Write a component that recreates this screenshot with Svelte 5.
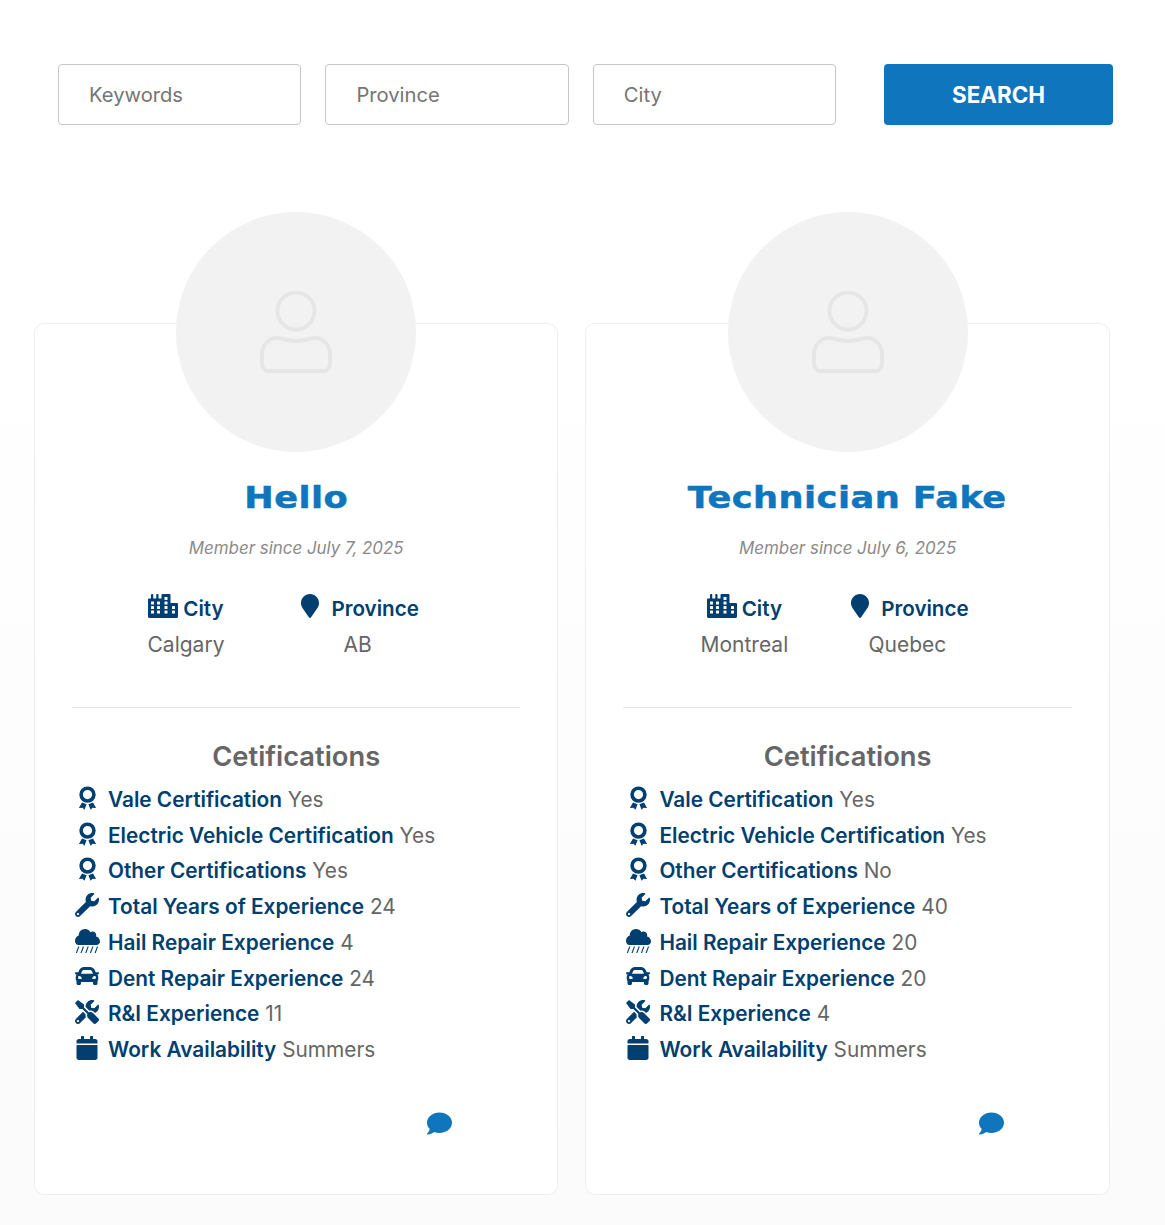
<script>
  const I = {
    wrench: { v: '0 0 512 512', d: 'M507.73 109.1c-2.24-9.03-13.54-12.09-20.12-5.51l-74.36 74.36-67.88-11.31-11.31-67.88 74.36-74.36c6.62-6.62 3.43-17.9-5.66-20.16-47.38-11.74-99.55.91-136.58 37.93-39.64 39.64-50.55 97.1-34.05 147.2L18.74 402.76c-24.99 24.99-24.99 65.51 0 90.5 24.99 24.99 65.51 24.99 90.5 0l213.21-213.21c50.12 16.71 107.47 5.68 147.37-34.22 37.07-37.07 49.7-89.32 37.91-136.73zM64 472c-13.25 0-24-10.75-24-24 0-13.26 10.75-24 24-24s24 10.74 24 24c0 13.25-10.75 24-24 24z' },
    hail: { v: '0 32 640 614', d: 'M537.6 226.6c4.1-10.7 6.4-22.4 6.4-34.6 0-53-43-96-96-96-19.7 0-38.1 6-53.3 16.2C367 64.2 315.3 32 256 32c-88.4 0-160 71.6-160 160 0 2.7.1 5.4.2 8.1C40.2 219.8 0 273.2 0 336c0 60 40 104 90 104h460c50 0 90-40 90-88 0-61.9-44-113.6-102.4-125.4z M20 646l62-168h30l-62 168zM140 646l62-168h30l-62 168zM260 646l62-168h30l-62 168zM380 646l62-168h30l-62 168zM500 646l62-168h30l-62 168z' },
    car: { v: '0 0 512 512', d: 'M499.99 176h-59.87l-16.64-41.6C406.38 91.63 365.57 64 319.5 64h-127c-46.06 0-86.88 27.63-103.99 70.4L71.87 176H12.01C4.2 176-1.53 183.34.37 190.91l6 24C7.7 220.25 12.5 224 18.01 224h20.07C24.65 235.73 16 252.78 16 272v48c0 16.12 6.16 30.67 16 41.93V416c0 17.67 14.33 32 32 32h32c17.67 0 32-14.33 32-32v-32h256v32c0 17.67 14.33 32 32 32h32c17.67 0 32-14.33 32-32v-54.07c9.84-11.25 16-25.8 16-41.93v-48c0-19.22-8.65-36.27-22.07-48H494c5.51 0 10.31-3.75 11.64-9.09l6-24c1.89-7.57-3.84-14.91-11.65-14.91zm-352.06-17.83c7.29-18.22 24.94-30.17 44.57-30.17h127c19.63 0 37.28 11.95 44.57 30.17L384 208H128l19.93-49.83zM96 319.8c-19.2 0-32-12.76-32-31.9S76.8 256 96 256s48 28.71 48 47.85-28.8 15.95-48 15.95zm320 0c-19.2 0-48 3.19-48-15.95S396.8 256 416 256s32 12.76 32 31.9-12.8 31.9-32 31.9z' },
    tools: { v: '0 0 512 512', d: 'M501.1 395.7L384 278.6c-23.1-23.1-57.6-27.6-85.4-13.9L192 158.1V96L64 0 0 64l96 128h62.1l106.6 106.6c-13.6 27.8-9.2 62.3 13.9 85.4l117.1 117.1c14.6 14.6 38.2 14.6 52.7 0l52.7-52.7c14.5-14.6 14.5-38.2 0-52.7zM331.7 225c28.3 0 54.9 11 74.9 31l19.4 19.4c15.8-6.9 30.8-16.5 43.8-29.5 37.1-37.1 49.7-89.3 37.9-136.7-2.2-9-13.5-12.1-20.1-5.5l-74.4 74.4-67.9-11.3L334 98.9l74.4-74.4c6.6-6.6 3.4-17.9-5.7-20.2-47.4-11.7-99.6.9-136.6 37.9-28.5 28.5-41.9 66.1-41.2 103.6l82.1 82.1c8.1-1.9 16.5-2.9 24.7-2.9zm-103.9 82l-56.7-56.7L18.7 402.8c-25 25-25 65.5 0 90.5s65.5 25 90.5 0l123.6-123.6c-7.6-19.9-9.9-41.6-5-62.7zM64 472c-13.2 0-24-10.8-24-24 0-13.3 10.7-24 24-24s24 10.7 24 24c0 13.2-10.7 24-24 24z' },
    calendar: { v: '0 0 448 512', d: 'M12 192h424c6.6 0 12 5.4 12 12v260c0 26.5-21.5 48-48 48H48c-26.5 0-48-21.5-48-48V204c0-6.6 5.4-12 12-12zm436-44v-36c0-26.5-21.5-48-48-48h-48V12c0-6.6-5.4-12-12-12h-40c-6.6 0-12 5.4-12 12v52H160V12c0-6.6-5.4-12-12-12h-40c-6.6 0-12 5.4-12 12v52H48C21.5 64 0 85.5 0 112v36c0 6.6 5.4 12 12 12h424c6.6 0 12-5.4 12-12z' }
  };
  const marker = 'M172.268 501.67C26.97 291.031 0 269.413 0 192 0 85.961 85.961 0 192 0s192 85.961 192 192c0 77.413-26.97 99.031-172.268 309.67-9.535 13.774-29.93 13.773-39.464 0z';
  const comment = 'M256 32C114.6 32 0 125.1 0 240c0 49.6 21.4 95 57 130.7C44.5 421.1 2.7 466 2.2 466.5c-2.2 2.3-2.8 5.7-1.5 8.7S4.8 480 8 480c66.3 0 116-31.8 140.6-51.4 32.7 12.3 69 19.4 107.4 19.4 141.4 0 256-93.1 256-208S397.4 32 256 32z';
  const city = 'M616 192H480V24c0-13.26-10.74-24-24-24H312c-13.26 0-24 10.74-24 24v72h-64V16c0-8.84-7.16-16-16-16h-16c-8.84 0-16 7.16-16 16v80h-64V16c0-8.84-7.16-16-16-16H80c-8.84 0-16 7.16-16 16v80H24c-13.26 0-24 10.74-24 24v360c0 17.67 14.33 32 32 32h576c17.67 0 32-14.33 32-32V216c0-13.26-10.75-24-24-24z';
  const windows = [[64,160],[64,256],[64,352],[192,160],[192,256],[192,352],[352,64],[352,160],[352,256],[352,352],[512,256],[512,352]];

  const techs = [
    { name: 'Hello', since: 'Member since July 7, 2025', city: 'Calgary', prov: 'AB', cls: 'first', vals: ['Yes','Yes','Yes','24','4','24','11','Summers'] },
    { name: 'Technician Fake', since: 'Member since July 6, 2025', city: 'Montreal', prov: 'Quebec', cls: 'second', vals: ['Yes','Yes','No','40','20','20','4','Summers'] }
  ];
  const rows = [
    ['award','Vale Certification'],
    ['award','Electric Vehicle Certification'],
    ['award','Other Certifications'],
    ['wrench','Total Years of Experience'],
    ['hail','Hail Repair Experience'],
    ['car','Dent Repair Experience'],
    ['tools','R&I Experience'],
    ['calendar','Work Availability']
  ];
</script>

<div class="page">
  <form class="search" onsubmit={(e) => e.preventDefault()}>
    <input placeholder="Keywords" />
    <input placeholder="Province" />
    <input placeholder="City" />
    <button type="submit">SEARCH</button>
  </form>

  <div class="cards">
    {#each techs as t}
      <section class="col">
        <div class="avatar">
          <svg viewBox="0 0 72 82" width="72" height="82" fill="none" stroke="#e6e6e6" stroke-width="4">
            <circle cx="36" cy="20" r="18.5" />
            <path d="M17 47c5 0 9 3 19 3s14-3 19-3c9 0 15 8 15 16v10c0 4-3 7-6 7H8c-3 0-6-3-6-7v-10c0-8 6-16 15-16z" />
          </svg>
        </div>
        <article class="card">
          <h2>{t.name}</h2>
          <p class="since">{t.since}</p>
          <div class="loc {t.cls}">
            <div class="loc-item">
              <div class="loc-head">
                <svg viewBox="0 0 640 512" width="30" height="24">
                  <path d={city} fill="#003f6f" />
                  {#each windows as w}<rect x={w[0]} y={w[1]} width="64" height="64" rx="8" fill="#fff" />{/each}
                </svg>
                <span>City</span>
              </div>
              <div class="loc-val">{t.city}</div>
            </div>
            <div class="loc-item">
              <div class="loc-head prov">
                <svg viewBox="0 0 384 512" width="18" height="24"><path d={marker} fill="#003f6f" /></svg>
                <span>Province</span>
              </div>
              <div class="loc-val prov-val">{t.prov}</div>
            </div>
          </div>
          <hr />
          <h3>Cetifications</h3>
          <ul>
            {#each rows as r, i}
              <li>
                <span class="ico">
                  {#if r[0] === 'award'}
                    <svg viewBox="0 0 19 24" class="award">
                      <circle cx="9.5" cy="8.6" r="6.4" fill="none" stroke="#003f6f" stroke-width="3.6" />
                      <path d="M4 16.5l4.6 1.7-2.2 5.5-1.9-2-3.6.4zM15 16.5l-4.6 1.7 2.2 5.5 1.9-2 3.6.4z" fill="#003f6f" />
                    </svg>
                  {:else}
                    <svg viewBox={I[r[0]].v} class={r[0]}><path d={I[r[0]].d} fill="#003f6f" /></svg>
                  {/if}
                </span>
                <span class="lbl">{r[1]}</span> <span class="val">{t.vals[i]}</span>
              </li>
            {/each}
          </ul>
          <div class="chat">
            <svg viewBox="0 0 512 512" width="25" height="25"><path d={comment} fill="#0f75bc" /></svg>
          </div>
        </article>
      </section>
    {/each}
  </div>
</div>

<style>
  :global(body) { background: #fff; }
  .page {
    height: 1225px;
    box-sizing: border-box;
    padding-top: 64px;
    overflow: hidden;
    background: linear-gradient(#fff 0, #fff 300px, #fbfbfb 1225px);
    font-family: Inter, "Liberation Sans", sans-serif;
  }
  .search {
    display: flex;
    gap: 24px;
    margin-left: 58px;
    width: 1055px;
  }
  input {
    width: 243.4px;
    height: 61px;
    box-sizing: border-box;
    border: 1px solid #c6c6c6;
    border-radius: 4px;
    padding: 0 30px;
    background: #fff;
    font: 400 20.2px Inter, sans-serif;
    outline: none;
  }
  input::placeholder { color: #757575; opacity: 1; }
  button {
    width: 229px;
    height: 61px;
    margin-left: 24px;
    border: 0;
    border-radius: 4px;
    background: #0f75bc;
    color: #fff;
    font: 700 22.4px Inter, sans-serif;
  }
  .cards {
    display: flex;
    gap: 27px;
    margin: 87px 0 0 34px;
  }
  .col {
    width: 524.4px;
    position: relative;
    padding-top: 111px;
  }
  .avatar {
    position: absolute;
    left: calc(50% - 120px);
    top: 0;
    width: 240px;
    height: 240px;
    border-radius: 50%;
    background: #f2f2f2;
    display: flex;
    align-items: center;
    justify-content: center;
    z-index: 1;
  }
  .card {
    height: 872px;
    box-sizing: border-box;
    background: #fff;
    border: 1px solid #eeeeee;
    border-radius: 10px;
    padding: 150px 37px 0;
    text-align: center;
  }
  h2 {
    margin: 0;
    font: 700 31px/46px "DejaVu Sans", sans-serif;
    color: #0f75bc;
    text-align: center;
    letter-spacing: .4px;
    transform: scaleX(1.135);
    -webkit-text-stroke: .5px #0f75bc;
  }
  .since {
    margin: 16px 0 0;
    font-size: 16.9px;
    line-height: 24px;
    font-style: italic;
    color: #8a8a8a;
    text-align: center;
  }
  .loc {
    display: flex;
    justify-content: center;
    margin-top: 33px;
    padding-right: 26px;
    font-size: 21px;
  }
  .loc-item { display: flex; flex-direction: column; align-items: center; }
  .first .loc-item:first-child { margin-right: 77px; }
  .second .loc-item:first-child { margin-right: 63px; }
  .loc-head { display: flex; align-items: center; height: 30px; gap: 5px; color: #003f6f; font-weight: 600; font-size: 20.6px; }
  .loc-head svg { margin-top: -4px; }
  .prov { gap: 12px; }
  .loc-val { margin-top: 7px; height: 30px; line-height: 30px; color: #666; }
  .prov-val { margin-right: 5px; }
  hr {
    border: 0;
    border-top: 1px solid #e3e3e3;
    margin: 47px 0 0;
  }
  h3 {
    margin: 31px 0 0;
    font-size: 27.3px;
    line-height: 36px;
    font-weight: 600;
    color: #666;
    text-align: center;
  }
  ul { list-style: none; margin: 7px 0 0; padding: 0; text-align: left; }
  li {
    height: 35.72px;
    line-height: 35.72px;
    font-size: 20.8px;
    white-space: nowrap;
    position: relative;
    padding-left: 36px;
  }
  .ico {
    position: absolute;
    left: 2px;
    top: -2px;
    width: 26px;
    height: 35.72px;
    display: flex;
    align-items: center;
    justify-content: center;
  }
  .ico svg { width: 24px; height: 24px; display: block; }
  .ico svg.hail { width: 25px; height: 24px; }
  .ico svg.award { width: 19px; height: 24px; }
  .lbl { color: #003f6f; font-weight: 600; }
  .val { color: #666; }
  .chat { display: flex; justify-content: flex-end; padding-right: 68px; margin-top: 43px; }
</style>
